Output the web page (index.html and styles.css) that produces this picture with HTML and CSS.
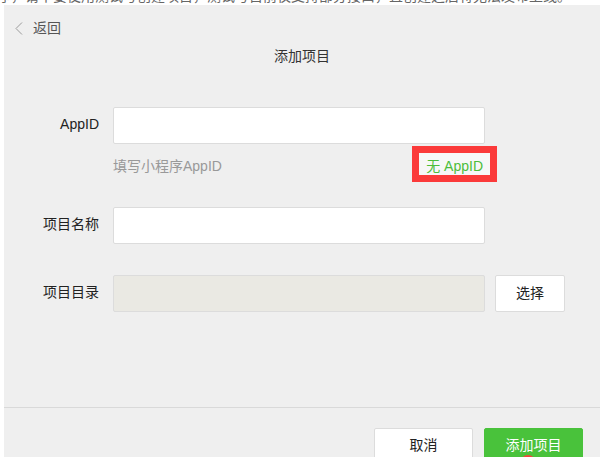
FILE: index.html
```html
<!DOCTYPE html>
<html lang="zh-CN">
<head>
<meta charset="utf-8">
<title>添加项目</title>
<link rel="stylesheet" href="styles.css">
</head>
<body>
<div class="topline"><span>序，请不要使用测试号创建项目，测试号目前仅支持部分接口，且创建之后将无法发布上线。</span></div>
<div class="panel">
  <div class="main">
    <div class="back">
      <svg class="chev" width="8" height="13" viewBox="0 0 8 13"><path d="M7 0.5 L1 6.5 L7 12.5" fill="none" stroke="#9a9a9a" stroke-width="1"/></svg>
      <span>返回</span>
    </div>
    <div class="title">添加项目</div>
    <div class="form">
      <div class="row">
        <label class="label">AppID</label>
        <div class="field">
          <div class="input"></div>
          <div class="hint-row">
            <span class="hint">填写小程序AppID</span>
            <span class="noappid">无 AppID<span class="mark"></span></span>
          </div>
        </div>
      </div>
      <div class="row row-gap">
        <label class="label">项目名称</label>
        <div class="field"><div class="input"></div></div>
      </div>
      <div class="row row-gap">
        <label class="label">项目目录</label>
        <div class="field"><div class="input disabled"></div></div>
        <div class="btn small">选择</div>
      </div>
    </div>
  </div>
  <div class="footer">
    <div class="btn big">取消</div>
    <div class="btn big primary">添加项目<span class="dot"></span></div>
  </div>
</div>
</body>
</html>
```
FILE: styles.css
```css
html, body {
  margin: 0;
  padding: 0;
  background: #ffffff;
  overflow: hidden;
}
body {
  width: 600px;
  height: 457px;
  font-family: "Liberation Sans", "Noto Sans CJK SC", sans-serif;
  font-size: 14px;
  color: #333;
}
.topline {
  height: 5px;
  overflow: hidden;
  white-space: nowrap;
  font-size: 14px;
  line-height: 14px;
  color: #666;
}
.topline span {
  display: block;
  margin-top: -11px;
  margin-left: -3px;
}
.panel {
  margin-left: 4px;
  height: 452px;
  background: #efefef;
  display: flex;
  flex-direction: column;
  overflow: hidden;
}
.main {
  flex: 1;
}
.back {
  display: flex;
  align-items: center;
  padding-top: 14px;
  padding-left: 11px;
  height: 18px;
  line-height: 18px;
  color: #555;
}
.chev {
  display: block;
  margin-right: 10px;
}
.title {
  margin-top: 10px;
  line-height: 18px;
  text-align: center;
  color: #333;
}
.form {
  margin-top: 42px;
}
.row {
  display: flex;
  align-items: flex-start;
}
.row-gap {
  margin-top: 31px;
}
.label {
  width: 95px;
  text-align: right;
  margin-right: 14px;
  padding-top: 8px;
  line-height: 18px;
  color: #222;
}
.field {
  width: 372px;
}
.input {
  box-sizing: border-box;
  height: 37px;
  background: #fff;
  border: 1px solid #dcdcdc;
  border-radius: 2px;
}
.input.disabled {
  background: #eae9e3;
}
.hint-row {
  margin-top: 12px;
  display: flex;
  justify-content: space-between;
  line-height: 20px;
}
.hint {
  color: #999;
}
.noappid {
  position: relative;
  z-index: 0;
  color: #4cbd3a;
  margin-right: 2px;
}
.noappid::before {
  content: "";
  position: absolute;
  left: -7px;
  right: -7px;
  top: -3px;
  bottom: -1px;
  background: #f7f7f7;
  z-index: -1;
}
.mark {
  position: absolute;
  left: -14px;
  right: -14px;
  top: -10px;
  bottom: -6px;
  border: 7px solid #fb3a3a;
}
.btn {
  box-sizing: border-box;
  background: #fff;
  border: 1px solid #dcdcdc;
  border-radius: 2px;
  text-align: center;
  color: #222;
}
.btn.small {
  margin-left: 10px;
  width: 70px;
  height: 37px;
  line-height: 35px;
}
.footer {
  height: 50px;
  box-sizing: border-box;
  border-top: 1px solid #d9d9d9;
  padding-top: 20px;
  padding-right: 17px;
  display: flex;
  justify-content: flex-end;
  gap: 11px;
}
.btn.big {
  width: 99px;
  height: 37px;
  line-height: 33px;
  flex: none;
  position: relative;
  overflow: hidden;
}
.btn.primary {
  background: #49c23b;
  border-color: #49c23b;
  color: #fff;
}
.dot {
  position: absolute;
  left: 35px;
  top: 26px;
  width: 16px;
  height: 16px;
  border-radius: 50%;
  background: #f0473e;
}
```
